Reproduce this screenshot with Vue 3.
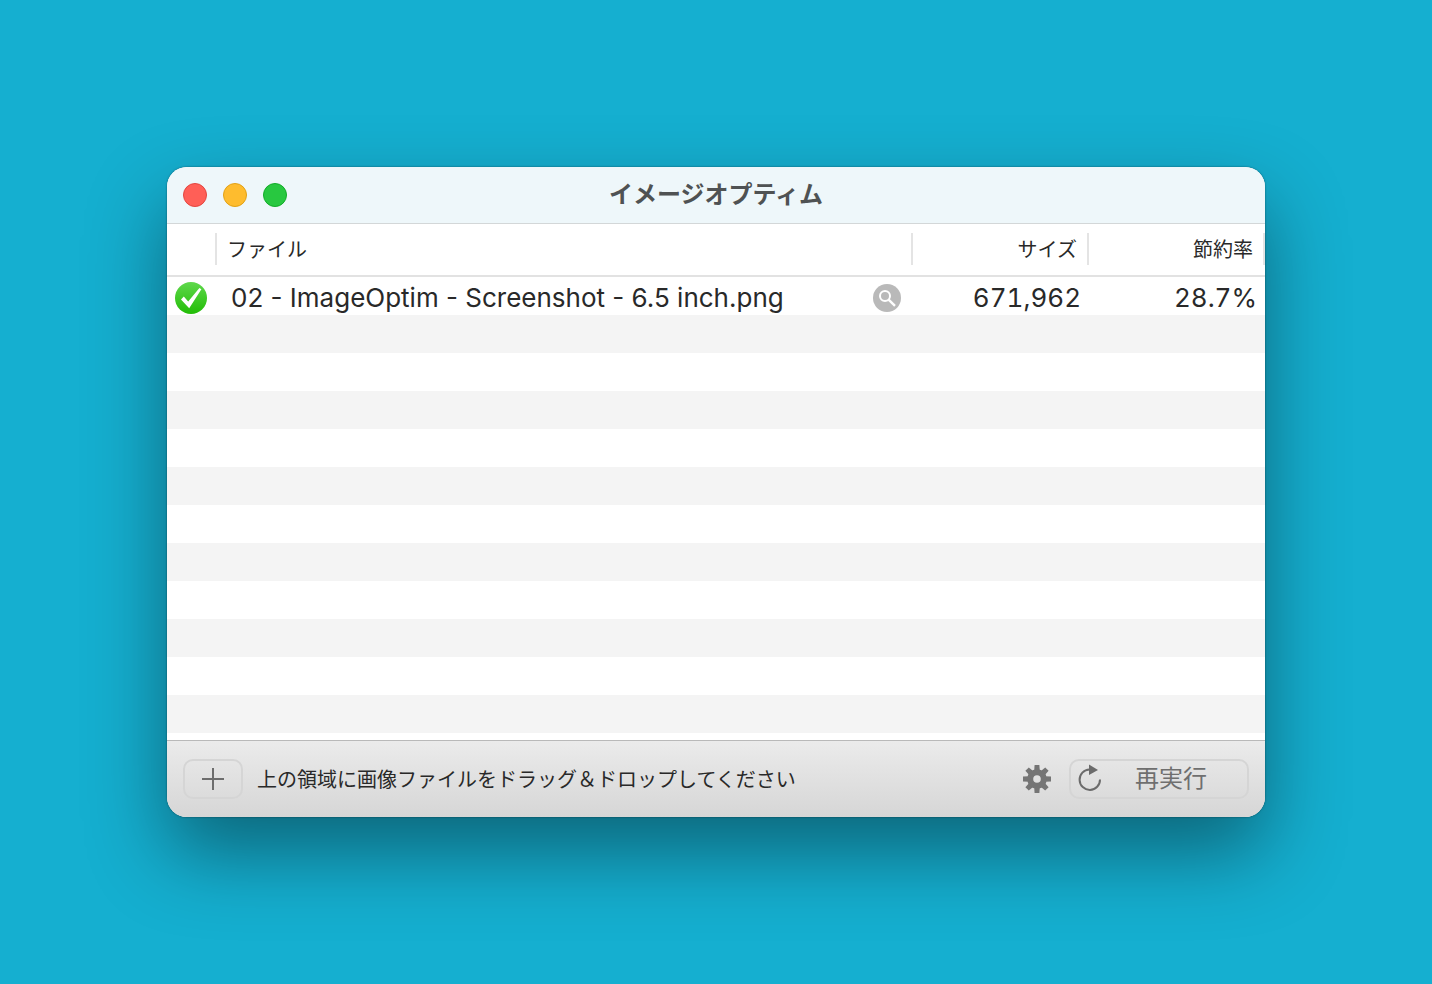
<script setup>
const files = [
  { name: '02 - ImageOptim - Screenshot - 6.5 inch.png', size: '671,962', savings: '28.7%' },
]
const teeth = [0, 45, 90, 135, 180, 225, 270, 315]
</script>

<template>
  <main class="desktop">
    <section class="window" aria-labelledby="title">
      <header class="titlebar">
        <div class="lights">
          <button type="button" class="light close" aria-label="Close"></button>
          <button type="button" class="light minimize" aria-label="Minimize"></button>
          <button type="button" class="light zoom" aria-label="Zoom"></button>
        </div>
        <h1 id="title">イメージオプティム</h1>
      </header>

      <div class="list">
        <table>
          <colgroup>
            <col class="col-status" />
            <col />
            <col class="col-size" />
            <col class="col-savings" />
          </colgroup>
          <thead>
            <tr>
              <th scope="col"><div class="label"></div></th>
              <th scope="col"><div class="label">ファイル</div></th>
              <th scope="col"><div class="label end">サイズ</div></th>
              <th scope="col"><div class="label end">節約率</div></th>
            </tr>
          </thead>
          <tbody>
            <tr v-for="file in files" :key="file.name">
              <td>
                <svg class="check" viewBox="0 0 32 32" width="32" height="32" aria-hidden="true">
                  <defs>
                    <linearGradient id="green" x1="0" y1="0" x2="0" y2="1">
                      <stop offset="0" stop-color="#5fd84c" />
                      <stop offset="1" stop-color="#22bd06" />
                    </linearGradient>
                  </defs>
                  <circle cx="16" cy="16" r="16" fill="url(#green)" />
                  <path d="M6 17.4 8.8 14.6 13.2 19.4 24.4 6 26.4 7.2 14.2 26.2Z" fill="#fff" />
                </svg>
              </td>
              <td>
                <div class="file">
                  <span>{{ file.name }}</span>
                  <button type="button" class="reveal" aria-label="Reveal file">
                    <svg viewBox="0 0 28 28" width="28" height="28" aria-hidden="true">
                      <circle cx="14" cy="14" r="14" fill="#b9b9b9" />
                      <circle cx="12" cy="12" r="5" fill="none" stroke="#fff" stroke-width="2" />
                      <path d="M15.6 15.6 22 21.8" stroke="#fff" stroke-width="2.4" />
                    </svg>
                  </button>
                </div>
              </td>
              <td class="number">{{ file.size }}</td>
              <td class="number">{{ file.savings }}</td>
            </tr>
          </tbody>
        </table>
        <div class="stripes"></div>
      </div>

      <footer class="toolbar">
        <button type="button" class="button add" aria-label="Add">
          <svg viewBox="0 0 22 22" width="22" height="22" aria-hidden="true">
            <path d="M11 0V22M0 11H22" stroke="#6d6d6d" stroke-width="2" />
          </svg>
        </button>
        <p>上の領域に画像ファイルをドラッグ＆ドロップしてください</p>
        <button type="button" class="gear" aria-label="Settings">
          <svg viewBox="-14 -14 28 28" width="28" height="28" aria-hidden="true">
            <g fill="#757575">
              <path
                v-for="angle in teeth"
                :key="angle"
                d="M-2.8 -8 -2.4 -14H2.4L2.8 -8Z"
                :transform="`rotate(${angle})`"
              />
            </g>
            <circle r="6.8" fill="none" stroke="#757575" stroke-width="6" />
          </svg>
        </button>
        <button type="button" class="button again">
          <svg viewBox="0 0 24 28" width="24" height="28" aria-hidden="true">
            <path d="M11.5 4.5A10.2 10.2 0 1 0 22 14.5" fill="none" stroke="#6b6b6b" stroke-width="2" />
            <path d="M11 -0.5 20 5 11 10Z" fill="#6b6b6b" />
          </svg>
          <span>再実行</span>
        </button>
      </footer>
    </section>
  </main>
</template>

<style>
body {
  margin: 0;
  background: #15afd0;
}
</style>

<style scoped>
.desktop {
  box-sizing: border-box;
  min-height: 100vh;
  padding: 167px;
  display: flex;
  background: #15afd0;
  font-family: Inter, "Noto Sans CJK JP", sans-serif;
  color: #292929;
}
.window {
  flex: 1;
  min-width: 0;
  display: flex;
  flex-direction: column;
  overflow: hidden;
  border-radius: 20px;
  background: #fff;
  box-shadow: 0 0 2px rgba(0, 0, 0, 0.5), 0 36px 80px rgba(0, 0, 0, 0.42);
}
button {
  padding: 0;
  border: 0;
  background: none;
  font: inherit;
  color: inherit;
}
svg {
  display: block;
  overflow: visible;
}
.titlebar {
  display: grid;
  grid-template-columns: 1fr auto 1fr;
  align-items: center;
  height: 56px;
  padding: 0 16px;
  background: #eef7fa;
  border-bottom: 1px solid #d3d7d8;
}
.lights {
  display: flex;
  gap: 16px;
}
.light {
  width: 24px;
  height: 24px;
  border-radius: 50%;
}
.close {
  background: #ff5f57;
  border: 1px solid #e2463f;
}
.minimize {
  background: #febc2e;
  border: 1px solid #e1a116;
}
.zoom {
  background: #28c840;
  border: 1px solid #12ac28;
}
h1 {
  margin: 0;
  font-size: 24px;
  line-height: 32px;
  font-weight: 700;
  color: #4f5253;
}
.list {
  flex: 1;
  display: flex;
  flex-direction: column;
}
table {
  width: 100%;
  table-layout: fixed;
  border-collapse: separate;
  border-spacing: 0;
}
.col-status {
  width: 50px;
}
.col-size,
.col-savings {
  width: 176px;
}
th,
td {
  padding: 0;
}
th {
  height: 49px;
  padding-bottom: 2px;
  border-bottom: 2px solid #e2e2e2;
  font-weight: 400;
}
.label {
  box-sizing: border-box;
  height: 32px;
  padding: 0 10px;
  border-right: 2px solid #e4e4e4;
  font-size: 20px;
  line-height: 34px;
  text-align: left;
}
.label.end {
  text-align: right;
}
td {
  height: 35px;
  padding-top: 3px;
  font-size: 26px;
  line-height: 35px;
}
.check {
  margin-left: 8px;
}
.file {
  display: flex;
  align-items: center;
  justify-content: space-between;
  padding: 0 12px 0 14px;
  white-space: nowrap;
}
.number {
  padding-right: 8px;
  text-align: right;
  font-variant-numeric: tabular-nums;
}
.stripes {
  flex: 1;
  background: repeating-linear-gradient(#f4f4f4 0 38px, #fff 38px 76px);
}
.toolbar {
  display: flex;
  align-items: center;
  height: 76px;
  padding: 0 16px;
  border-top: 1px solid #b9b9b9;
  background: linear-gradient(#ebebeb, #d6d6d6);
}
.button {
  box-sizing: border-box;
  height: 40px;
  display: flex;
  align-items: center;
  border: 2px solid #d5d5d5;
  border-radius: 10px;
}
.add {
  width: 60px;
  justify-content: center;
}
p {
  flex: 1;
  margin: 0 0 0 14px;
  padding-top: 2px;
  font-size: 20px;
  line-height: 32px;
}
.gear {
  margin-right: 18px;
}
.again {
  width: 180px;
  padding: 0 7px;
  color: #6f6f6f;
  font-size: 24px;
  line-height: 32px;
}
.again span {
  flex: 1;
}
</style>
